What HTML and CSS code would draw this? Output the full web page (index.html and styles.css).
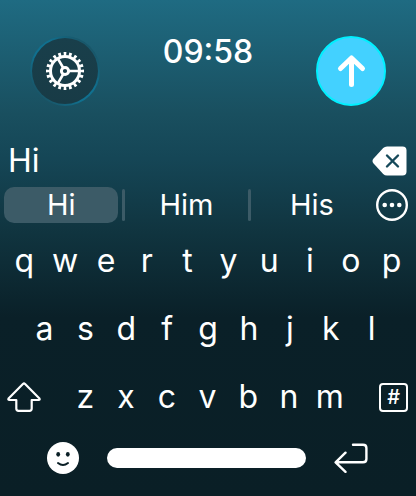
FILE: index.html
```html
<!DOCTYPE html>
<html lang="en">
<head>
<meta charset="utf-8">
<meta name="viewport" content="width=device-width, initial-scale=1">
<title>Keyboard</title>
<link rel="stylesheet" href="styles.css">
</head>
<body>
<main class="screen">
  <header class="top">
    <button class="round round-dark" aria-label="Settings">
      <svg width="38" height="38" viewBox="0 0 38 38" fill="none" stroke="currentColor">
        <circle cx="19" cy="19" r="17" stroke-width="4" pathLength="40" stroke-dasharray="1 1" stroke-dashoffset="0.5"/>
        <circle cx="19" cy="19" r="14.5" stroke-width="3"/>
        <circle cx="19" cy="19" r="3.600" stroke-width="3"/>
        <path d="M23 19H33M17 15.5L12 6.8M17 22.5L12 31.2" stroke-width="2.6"/>
      </svg>
    </button>
    <time class="clock">09:58</time>
    <button class="round round-blue" aria-label="Send">
      <svg width="38" height="38" viewBox="0 0 38 38" fill="none" stroke="currentColor" stroke-width="5" stroke-linecap="round" stroke-linejoin="round">
        <path d="M19.5 32.5V6.5M8.500 16.500L19.500 6L30.500 16.500"/>
      </svg>
    </button>
  </header>

  <div class="entry">
    <input class="field" type="text" value="Hi" aria-label="Message">
    <button class="plain" aria-label="Delete">
      <svg width="35" height="30" viewBox="0 0 35 30">
        <path d="M15 .5H30.500Q34.500 .5 34.500 4.500V25.500Q34.500 29.500 30.500 29.500H15Q12.800 29.500 11.200 28L1.600 17.600Q-.6 15 1.600 12.400L11.200 2Q12.800 .5 15 .5Z" fill="currentColor"/>
        <path d="M15 9.500L26 20.500M26 9.500L15 20.500" stroke="#16495a" stroke-width="2.400" stroke-linecap="round"/>
      </svg>
    </button>
  </div>

  <div class="suggestions">
    <button class="word word-active">Hi</button>
    <span class="divider"></span>
    <button class="word">Him</button>
    <span class="divider"></span>
    <button class="word">His</button>
    <button class="plain more" aria-label="More">
      <svg width="32" height="32" viewBox="0 0 32 32">
        <circle cx="16" cy="16" r="14.800" fill="none" stroke="currentColor" stroke-width="2.400"/>
        <g fill="currentColor"><circle cx="8.700" cy="16" r="2.300"/><circle cx="16" cy="16" r="2.300"/><circle cx="23.300" cy="16" r="2.300"/></g>
      </svg>
    </button>
  </div>

  <div class="row">
    <button class="key">q</button><button class="key">w</button><button class="key">e</button><button class="key">r</button><button class="key">t</button><button class="key">y</button><button class="key">u</button><button class="key">i</button><button class="key">o</button><button class="key">p</button>
  </div>
  <div class="row row-inset">
    <button class="key">a</button><button class="key">s</button><button class="key">d</button><button class="key">f</button><button class="key">g</button><button class="key">h</button><button class="key">j</button><button class="key">k</button><button class="key">l</button>
  </div>
  <div class="row row-mods">
    <button class="mod" aria-label="Shift">
      <svg width="34" height="30" viewBox="0 0 34 30" fill="none" stroke="currentColor" stroke-width="2.200" stroke-linejoin="round">
        <path d="M15.900 2Q17 1 18.100 2L32.200 16.200Q33.400 18 31.500 18H24.700V26.500Q24.700 28.800 22.400 28.800H11.600Q9.300 28.800 9.300 26.500V18H2.500Q.6 18 1.800 16.200Z"/>
      </svg>
    </button>
    <button class="key">z</button><button class="key">x</button><button class="key">c</button><button class="key">v</button><button class="key">b</button><button class="key">n</button><button class="key">m</button>
    <button class="mod mod-end" aria-label="Symbols"><span class="symbols">#</span></button>
  </div>

  <div class="bottom">
    <button class="plain" aria-label="Emoji">
      <svg width="32" height="32" viewBox="0 0 32 32">
        <circle cx="16" cy="16" r="16" fill="currentColor"/>
        <g fill="#0a1f26"><ellipse cx="11.200" cy="12.300" rx="1.900" ry="2.400"/><ellipse cx="20.800" cy="12.300" rx="1.900" ry="2.400"/></g>
        <path d="M11 21Q16 25 21 21" fill="none" stroke="#0a1f26" stroke-width="2" stroke-linecap="round"/>
      </svg>
    </button>
    <button class="space" aria-label="Space"></button>
    <button class="plain" aria-label="Return">
      <svg width="34" height="30" viewBox="0 0 34 30" fill="none" stroke="currentColor" stroke-width="2.400" stroke-linecap="round" stroke-linejoin="round">
        <path d="M19 1.800H29Q32.400 1.800 32.400 5V16Q32.400 19.300 29 19.300H2M11.500 9.700L1.600 19.300L11.500 28.800"/>
      </svg>
    </button>
  </div>
</main>
</body>
</html>
```
FILE: styles.css
```css
* {
  box-sizing: border-box;
}

html {
  height: 100%;
}

body {
  margin: 0;
  min-height: 100%;
  color: #fff;
  font-family: Inter, "Liberation Sans", sans-serif;
  background: linear-gradient(#1f6b82 0%, #194f5f 23%, #154656 32%, #10343f 47%, #0a2028 64%, #0a1f26 100%);
}

button,
input {
  margin: 0;
  padding: 0;
  border: 0;
  background: none;
  color: inherit;
  font: inherit;
}

svg {
  display: block;
}

.top {
  display: flex;
  justify-content: space-between;
  align-items: flex-start;
  padding: 36px 30px;
}

.round {
  display: grid;
  place-items: center;
  width: 70px;
  height: 70px;
  border-radius: 50%;
}

.round-dark {
  border: 2px solid transparent;
  background:
    linear-gradient(#193f4b, #183b46) padding-box,
    linear-gradient(45deg, #1a5364 12%, #10708f 40%, #10708f 60%, #1a5364 88%) border-box;
}

.round-blue {
  border: 2px solid #00f0ff;
  background: #43d1ff;
}

.clock {
  font-size: 32px;
  line-height: 32px;
  font-weight: 500;
}

.entry {
  display: flex;
  align-items: center;
  padding: 0 9px 0 8px;
  margin-bottom: 8px;
}

.field {
  flex: 1;
  min-width: 0;
  height: 37px;
  font-size: 32px;
  outline: 0;
}

.plain {
  flex: none;
}

.suggestions {
  display: flex;
  align-items: center;
  gap: 4px;
  padding: 0 8px 0 4px;
  margin-bottom: 4px;
}

.word {
  flex: 1 1 0;
  min-width: 0;
  height: 36px;
  border-radius: 10px;
  font-size: 29px;
  line-height: 36px;
}

.word-active {
  background: #3c5b67;
}

.divider {
  width: 3px;
  height: 32px;
  border-radius: 2px;
  background: #3c5b67;
}

.more {
  margin-left: 3px;
}

.row {
  display: flex;
  height: 68px;
  padding: 0 4px;
}

.row-inset {
  padding: 0 24px;
}

.row-mods {
  padding: 0 8px 0 7px;
}

.key {
  flex: 1 1 0;
  min-width: 0;
  font-size: 32px;
  line-height: 40px;
}

.mod {
  display: flex;
  align-items: center;
  width: 58px;
}

.mod-end {
  justify-content: flex-end;
}

.symbols {
  display: grid;
  place-items: center;
  width: 29px;
  height: 29px;
  border: 2px solid #fff;
  border-radius: 4px;
  font-size: 20px;
  line-height: 20px;
  font-weight: 500;
}

.bottom {
  display: flex;
  align-items: center;
  height: 54px;
  gap: 28px;
  padding: 0 48px 0 47px;
}

.space {
  flex: 1;
  height: 20px;
  border-radius: 10px;
  background: #fff;
}
```
